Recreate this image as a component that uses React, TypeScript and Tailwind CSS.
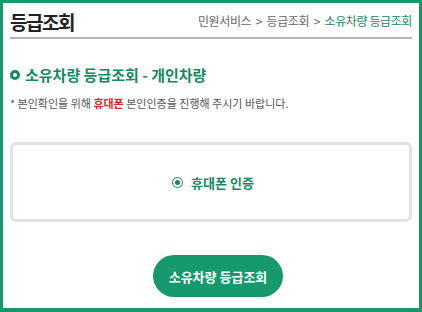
export default function App() {
  return (
    <div
      className="w-[422px] h-[312px] border-[3px] border-b-4 border-[#16976c] bg-white px-[7px] flex flex-col"
      style={{ fontFamily: '"Noto Sans CJK KR", "Noto Sans", sans-serif' }}
    >
      {/* Header */}
      <div className="flex items-end justify-between h-[36px] border-b-2 border-[#b5b5b5] pb-[6px]">
        <h1 className="text-[19px] font-bold text-[#222] leading-none tracking-[-1.5px]">등급조회</h1>
        <div className="text-[12px] text-[#666] leading-none pb-[4px] tracking-[-0.4px]">
          민원서비스 &nbsp;&gt;&nbsp; 등급조회 &nbsp;&gt;&nbsp;{' '}
          <span className="text-[#14895f]">소유차량 등급조회</span>
        </div>
      </div>

      {/* Title */}
      <h2 className="mt-[28px] flex items-center gap-[5px] text-[15px] font-bold text-[#14895f] leading-none">
        <span className="w-[10px] h-[10px] rounded-full border-[3px] border-[#14895f]" />
        소유차량 등급조회 - 개인차량
      </h2>
      <p className="mt-[16px] text-[11px] text-[#555] leading-none">
        * 본인확인을 위해 <span className="text-[#e0262c] font-bold">휴대폰</span> 본인인증을 진행해 주시기 바랍니다.
      </p>

      {/* Auth box */}
      <div className="mt-[33px] h-[80px] rounded-[6px] border-[3px] border-[#e2e2e2] flex items-center justify-center gap-[8px] pl-[4px]">
        <span className="w-[11px] h-[11px] rounded-full border border-[#14895f] flex items-center justify-center">
          <span className="w-[5px] h-[5px] rounded-full bg-[#14895f]" />
        </span>
        <span className="text-[13px] font-bold text-[#14895f] leading-none">휴대폰 인증</span>
      </div>

      {/* Button */}
      <div className="flex justify-center mt-[33px] pl-[14px]">
        <button className="h-[42px] px-[16px] rounded-full bg-[#16996c] text-white text-[13px] font-bold leading-none">
          소유차량 등급조회
        </button>
      </div>
    </div>
  )
}
